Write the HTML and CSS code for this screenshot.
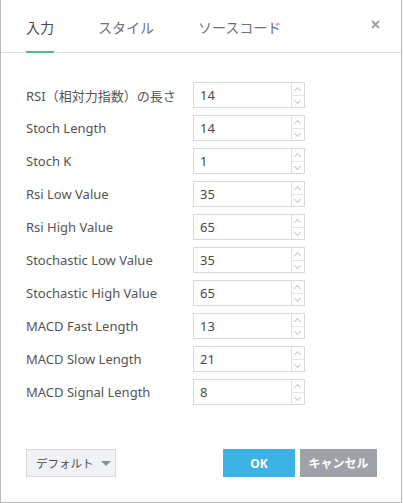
FILE: index.html
```html
<!DOCTYPE html>
<html lang="ja">
<head>
<meta charset="utf-8">
<link rel="stylesheet" href="styles.css">
</head>
<body>
<div class="dialog">
  <div class="header">
    <div class="tab active">入力</div>
    <div class="tab">スタイル</div>
    <div class="tab">ソースコード</div>
    <div class="close">
      <svg width="9" height="9" viewBox="0 0 9 9"><path d="M1 1L8 8M8 1L1 8" stroke="#9a9ea6" stroke-width="1.8" fill="none"/></svg>
    </div>
  </div>
  <div class="body">
    <div class="row"><div class="label">RSI（相対力指数）の長さ</div><div class="input"><span class="val">14</span><div class="spin"><span class="up"></span><span class="down"></span></div></div></div>
    <div class="row"><div class="label">Stoch Length</div><div class="input"><span class="val">14</span><div class="spin"><span class="up"></span><span class="down"></span></div></div></div>
    <div class="row"><div class="label">Stoch K</div><div class="input"><span class="val">1</span><div class="spin"><span class="up"></span><span class="down"></span></div></div></div>
    <div class="row"><div class="label">Rsi Low Value</div><div class="input"><span class="val">35</span><div class="spin"><span class="up"></span><span class="down"></span></div></div></div>
    <div class="row"><div class="label">Rsi High Value</div><div class="input"><span class="val">65</span><div class="spin"><span class="up"></span><span class="down"></span></div></div></div>
    <div class="row"><div class="label">Stochastic Low Value</div><div class="input"><span class="val">35</span><div class="spin"><span class="up"></span><span class="down"></span></div></div></div>
    <div class="row"><div class="label">Stochastic High Value</div><div class="input"><span class="val">65</span><div class="spin"><span class="up"></span><span class="down"></span></div></div></div>
    <div class="row"><div class="label">MACD Fast Length</div><div class="input"><span class="val">13</span><div class="spin"><span class="up"></span><span class="down"></span></div></div></div>
    <div class="row"><div class="label">MACD Slow Length</div><div class="input"><span class="val">21</span><div class="spin"><span class="up"></span><span class="down"></span></div></div></div>
    <div class="row"><div class="label">MACD Signal Length</div><div class="input"><span class="val">8</span><div class="spin"><span class="up"></span><span class="down"></span></div></div></div>
  </div>
  <div class="footer">
    <div class="default"><span class="dtext">デフォルト</span><span class="caret"></span></div>
    <div class="spacer"></div>
    <div class="btn ok">OK</div>
    <div class="btn cancel">キャンセル</div>
  </div>
</div>
</body>
</html>
```
FILE: styles.css
```css
html, body {
  margin: 0;
  padding: 0;
  background: #f4f4f4;
}
body {
  font-family: "Noto Sans", "Noto Sans CJK JP", sans-serif;
  color: #4c4c4c;
  width: 403px;
  height: 503px;
  overflow: hidden;
}
.dialog {
  width: 400px;
  height: 502px;
  background: #fff;
  border-left: 1px solid #b9b9b9;
  border-right: 1px solid #b9b9b9;
  border-bottom: 1px solid #b9b9b9;
  display: flex;
  flex-direction: column;
}
.header {
  height: 52px;
  border-bottom: 1px solid #dfdfdf;
  display: flex;
  align-items: stretch;
  padding-left: 25px;
  padding-right: 21px;
}
.tab {
  font-size: 14px;
  color: #6f7178;
  display: flex;
  align-items: center;
  padding-top: 2px;
  margin-right: 44px;
  border-bottom: 2px solid transparent;
  margin-bottom: -1px;
}
.tab.active {
  color: #4a4a4a;
  border-bottom-color: #53b987;
}
.close {
  margin-left: auto;
  display: flex;
  align-items: center;
  padding-bottom: 4px;
}
.close svg { display: block; }
.body {
  padding: 29px 0 0 25px;
  display: flex;
  flex-direction: column;
  gap: 7px;
}
.row {
  display: flex;
  align-items: center;
  height: 26px;
}
.label {
  width: 167px;
  font-size: 13px;
  color: #555555;
  white-space: nowrap;
}
.input {
  box-sizing: border-box;
  width: 112px;
  height: 26px;
  border: 1px solid #d9d9d9;
  display: flex;
  align-items: stretch;
}
.val {
  flex: 1;
  font-size: 13px;
  color: #4a4a4a;
  padding-left: 6px;
  display: flex;
  align-items: center;
}
.spin {
  width: 12px;
  border-left: 1px solid #e0e0e0;
  display: flex;
  flex-direction: column;
}
.spin span {
  flex: 1;
  position: relative;
}
.spin .up { border-bottom: 1px solid #e6e6e6; }
.spin span::before {
  content: "";
  position: absolute;
  left: 3px;
  width: 4px;
  height: 4px;
  border-left: 1px solid #c4c8cc;
  border-top: 1px solid #c4c8cc;
}
.spin .up::before {
  top: 5px;
  transform: rotate(45deg);
}
.spin .down::before {
  top: 2px;
  transform: rotate(225deg);
}
.footer {
  margin-top: auto;
  display: flex;
  align-items: center;
  padding: 0 24px 25px 25px;
  gap: 5px;
}
.default {
  box-sizing: border-box;
  flex-shrink: 0;
  height: 28px;
  width: 90px;
  border: 1px solid #d8d9de;
  background: #f1f2f6;
  font-size: 11.5px;
  color: #4a4a4a;
  display: flex;
  align-items: center;
  padding-left: 9px;
  white-space: nowrap;
}
.caret {
  margin-left: 7px;
  width: 0;
  height: 0;
  border-left: 5px solid transparent;
  border-right: 5px solid transparent;
  border-top: 5px solid #8f9096;
}
.spacer { flex: 1; }
.btn {
  flex-shrink: 0;
  height: 28px;
  color: #fff;
  font-size: 12px;
  font-weight: bold;
  white-space: nowrap;
  display: flex;
  align-items: center;
  justify-content: center;
}
.ok {
  width: 72px;
  background: #3cb3e4;
}
.cancel {
  width: 77px;
  background: #9ea1a8;
}
```
